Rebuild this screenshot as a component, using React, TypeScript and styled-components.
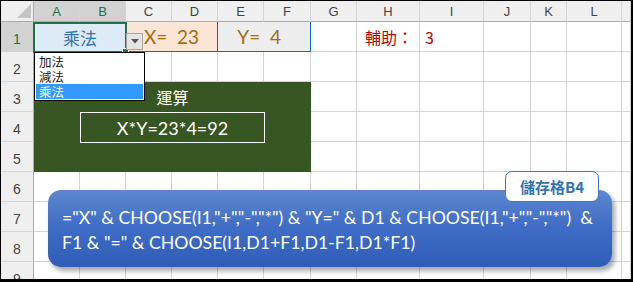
import React from 'react';
import styled, { createGlobalStyle, css } from 'styled-components';

const GlobalStyle = createGlobalStyle`
  html, body {
    margin: 0;
    padding: 0;
    background: #fff;
  }
`;

const CJK = `'Noto Sans CJK TC', 'Noto Sans', sans-serif`;
const LATIN = `Lato, 'Noto Sans CJK TC', sans-serif`;

const Frame = styled.div`
  position: relative;
  width: 633px;
  height: 282px;
  box-sizing: border-box;
  border-style: solid;
  border-color: #000;
  border-width: 1px 2px 3px 1px;
  overflow: hidden;
  font-family: ${LATIN};
`;

const Sheet = styled.div`
  display: grid;
  grid-template-columns: 33px 46px 46px 46px 46px 46px 47px 46px 63px 64px 47px 36px 55px 1fr;
  grid-template-rows: 21px repeat(9, 30px);
`;

interface PlaceProps {
  $col: number;
  $row: number;
  $colSpan?: number;
  $rowSpan?: number;
}

const place = css<PlaceProps>`
  grid-column: ${(p) => p.$col} / span ${(p) => p.$colSpan || 1};
  grid-row: ${(p) => p.$row} / span ${(p) => p.$rowSpan || 1};
  box-sizing: border-box;
`;

const HeaderCell = styled.div<PlaceProps & { $selected?: boolean }>`
  ${place};
  display: flex;
  align-items: center;
  justify-content: center;
  background: ${(p) => (p.$selected ? '#d2d2d2' : '#efefef')};
  color: ${(p) => (p.$selected ? '#217346' : '#444')};
  border-right: 1px solid #d4d4d4;
  border-bottom: 1px solid #ababab;
  font-family: 'Liberation Sans', Arial, sans-serif;
  font-size: 13px;
`;

const RowHeader = styled(HeaderCell)`
  border-right: 1px solid #ababab;
  border-bottom: 1px solid #d4d4d4;
  font-size: 14px;
  padding-top: 4px;
`;

const Corner = styled(HeaderCell)`
  border-right: 1px solid #ababab;
  align-items: flex-end;
  justify-content: flex-end;
  padding: 0 2px 3px 0;
`;

const GridCell = styled.div<PlaceProps>`
  ${place};
  border-right: 1px solid #d4d4d4;
  border-bottom: 1px solid #d4d4d4;
`;

const SelectedCell = styled.div<PlaceProps>`
  ${place};
  position: relative;
  display: flex;
  align-items: center;
  justify-content: center;
  margin: 0 -1px -1px -1px;
  background: #ddebf7;
  border: 2px solid #217346;
  color: #2e75b6;
  font-family: ${CJK};
  font-size: 17px;
`;

const FillHandle = styled.span`
  position: absolute;
  right: -4px;
  bottom: -4px;
  width: 5px;
  height: 5px;
  background: #217346;
  border: 1px solid #fff;
`;

const ValueCell = styled.div<PlaceProps & { $bg: string; $boxed?: boolean }>`
  ${place};
  display: flex;
  align-items: center;
  justify-content: center;
  background: ${(p) => p.$bg};
  border-bottom: 1px solid #0070c0;
  border-right: 1px solid ${(p) => (p.$boxed ? '#0070c0' : '#d4d4d4')};
  ${(p) =>
    p.$boxed &&
    css`
      border-left: 1px solid #0070c0;
      margin-left: -1px;
    `}
  color: #a0700f;
  font-size: 19px;
  white-space: pre;
`;

const RedCell = styled.div<PlaceProps & { $align: 'left' | 'right' }>`
  ${place};
  display: flex;
  align-items: center;
  justify-content: ${(p) => (p.$align === 'left' ? 'flex-start' : 'flex-end')};
  padding: ${(p) => (p.$align === 'left' ? '0 0 0 5px' : '0 6px 0 0')};
  border-right: 1px solid #d4d4d4;
  border-bottom: 1px solid #d4d4d4;
  color: #c00000;
  font-family: ${CJK};
  font-size: 16px;
`;

const GreenBlock = styled.div<PlaceProps>`
  ${place};
  display: flex;
  flex-direction: column;
  background: #375623;
  color: #fff;
`;

const GreenTitle = styled.div`
  height: 30px;
  display: flex;
  align-items: center;
  justify-content: center;
  font-family: ${CJK};
  font-size: 16px;
`;

const ResultBox = styled.div`
  margin-left: 46px;
  width: 185px;
  height: 31px;
  box-sizing: border-box;
  border: 1px solid #fff;
  display: flex;
  align-items: center;
  justify-content: center;
  font-size: 18px;
`;

const DropButton = styled.div`
  position: absolute;
  left: 125px;
  top: 32px;
  width: 17px;
  height: 17px;
  box-sizing: border-box;
  background: #e4e4e4;
  border: 1px solid #a6a6a6;
  display: flex;
  align-items: center;
  justify-content: center;
`;

const DropList = styled.ul`
  position: absolute;
  left: 33px;
  top: 51px;
  width: 111px;
  margin: 0;
  padding: 1px 1px;
  list-style: none;
  box-sizing: border-box;
  background: #fff;
  border: 1px solid #000;
  font-family: ${CJK};
  font-size: 12.5px;
  color: #222;
`;

const DropItem = styled.li<{ $active?: boolean }>`
  height: 15px;
  line-height: 15px;
  padding-left: 3px;
  background: ${(p) => (p.$active ? '#3399ff' : 'transparent')};
  color: ${(p) => (p.$active ? '#fff' : '#222')};
`;

const Callout = styled.div`
  position: absolute;
  left: 47px;
  top: 189px;
  width: 564px;
  height: 77px;
  box-sizing: border-box;
  padding: 15px 0 0 14px;
  border-radius: 13px;
  background: linear-gradient(180deg, #5d87d0 0%, #3f6cc4 50%, #2f5eb6 100%);
  box-shadow: 3px 4px 5px rgba(0, 0, 0, 0.35);
  color: #fff;
  font-size: 17.7px;
  line-height: 25px;
  white-space: pre;
`;

const Tag = styled.div`
  position: absolute;
  left: 504px;
  top: 170px;
  width: 94px;
  height: 31px;
  box-sizing: border-box;
  display: flex;
  align-items: center;
  justify-content: center;
  background: #fff;
  border: 1px solid #4472c4;
  border-radius: 7px;
  color: #2e75b6;
  font-family: ${CJK};
  font-weight: 700;
  font-size: 15px;
`;

const columns = ['A', 'B', 'C', 'D', 'E', 'F', 'G', 'H', 'I', 'J', 'K', 'L', ''];
const rows = [1, 2, 3, 4, 5, 6, 7, 8, 9];

export default function App() {
  return (
    <>
      <GlobalStyle />
      <Frame>
        <Sheet>
          <Corner $col={1} $row={1}>
            <svg width="14" height="14" viewBox="0 0 14 14">
              <polygon points="14,0 14,14 0,14" fill="#c4c4c4" />
            </svg>
          </Corner>
          {columns.map((c, i) => (
            <HeaderCell key={c + i} $col={i + 2} $row={1} $selected={c === 'A' || c === 'B'}>
              {c}
            </HeaderCell>
          ))}
          {rows.map((r) => (
            <RowHeader key={r} $col={1} $row={r + 1} $selected={r === 1}>
              {r}
            </RowHeader>
          ))}
          {rows.map((r) =>
            columns.map((c, i) => <GridCell key={`${r}-${i}`} $col={i + 2} $row={r + 1} />)
          )}

          <SelectedCell $col={2} $row={2} $colSpan={2}>
            乘法
            <FillHandle />
          </SelectedCell>
          <ValueCell $col={4} $row={2} $colSpan={2} $bg="#fce4d6">
            {'X=  23'}
          </ValueCell>
          <ValueCell $col={6} $row={2} $colSpan={2} $bg="#ededed" $boxed>
            {'Y=  4  '}
          </ValueCell>
          <RedCell $col={9} $row={2} $align="right">
            輔助：
          </RedCell>
          <RedCell $col={10} $row={2} $align="left">
            3
          </RedCell>

          <GreenBlock $col={2} $row={4} $colSpan={6} $rowSpan={3}>
            <GreenTitle>運算</GreenTitle>
            <ResultBox>X*Y=23*4=92</ResultBox>
          </GreenBlock>
        </Sheet>

        <DropButton>
          <svg width="8" height="5" viewBox="0 0 8 5">
            <polygon points="0,0 8,0 4,4.5" fill="#555" />
          </svg>
        </DropButton>
        <DropList>
          <DropItem>加法</DropItem>
          <DropItem>減法</DropItem>
          <DropItem $active>乘法</DropItem>
        </DropList>

        <Callout>
          {'="X" & CHOOSE(I1,"+","-","*") & "Y=" & D1 & CHOOSE(I1,"+","-","*")  &\nF1 & "=" & CHOOSE(I1,D1+F1,D1-F1,D1*F1)'}
        </Callout>
        <Tag>儲存格B4</Tag>
      </Frame>
    </>
  );
}
